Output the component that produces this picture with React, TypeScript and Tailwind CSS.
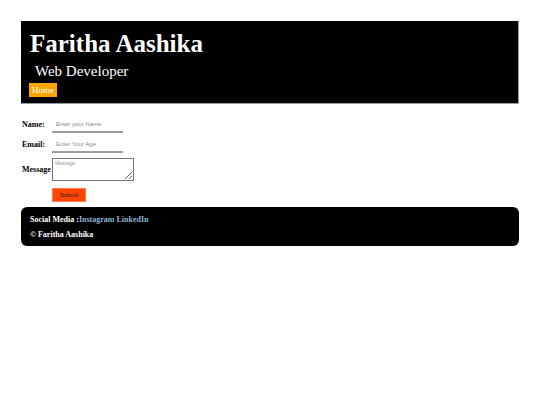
import React from "react";

// 폼 한 줄: 왼쪽 라벨 + 오른쪽 입력
function Row({
  label,
  className,
  children,
}: {
  label: string;
  className?: string;
  children: React.ReactNode;
}) {
  return (
    <div className={`flex items-center ${className ?? ""}`}>
      <label className="w-[31px] pl-px text-[8px] font-bold leading-none text-black">
        {label}
      </label>
      {children}
    </div>
  );
}

export default function App() {
  return (
    <div className="min-h-[405px] bg-white px-[21px] pt-[21px] font-['Liberation_Serif',serif]">
      <header className="flex h-[83px] flex-col border-b border-r border-[#9a9a9a] bg-black pl-[8px] pt-[10px] text-white">
        <h1 className="ml-px text-[25px] font-bold leading-[25px]">
          Faritha Aashika
        </h1>
        <h2 className="ml-[6px] mt-[8px] text-[15px] leading-[15px]">
          Web Developer
        </h2>
        <nav className="mt-[4px] flex">
          <a className="flex h-[14px] items-center bg-[#ffa500] px-[3px] text-[9px] leading-none text-white">
            Home
          </a>
        </nav>
      </header>

      <form className="mt-[12px] flex flex-col">
        <Row label="Name:">
          <input
            className="h-[17px] w-[71px] border-b-2 border-[#9e9e9e] pl-[4px] font-['Liberation_Sans',sans-serif] text-[6px] outline-none placeholder:text-[#8a8a8a]"
            placeholder="Enter your Name"
          />
        </Row>
        <Row label="Email:" className="mt-[3px]">
          <input
            className="h-[17px] w-[71px] border-b-2 border-[#9e9e9e] pl-[4px] font-['Liberation_Sans',sans-serif] text-[6px] outline-none placeholder:text-[#8a8a8a]"
            placeholder="Enter Your Age"
          />
        </Row>
        <Row label="Message" className="mt-[5px]">
          <textarea
            className="h-[23px] w-[82px] border border-[#767676] px-[2px] py-[1px] font-['Liberation_Sans',sans-serif] text-[5px] outline-none placeholder:text-[#9a9a9a]"
            placeholder="Message"
          />
        </Row>
        <div className="mt-[7px] pl-[31px]">
          <button
            type="button"
            className="flex h-[14px] w-[34px] items-center justify-center border border-[#ff7a4a] bg-[#ff4500] font-['Liberation_Sans',sans-serif] text-[6px] leading-none text-[#1a1a1a]"
          >
            Submit
          </button>
        </div>
      </form>

      <footer className="mt-[5px] rounded-[6px] bg-black pb-[4px] pl-[9px] pt-[5px] text-[8px] font-bold leading-[15px] text-white">
        <p>
          Social Media :<a className="text-[#8db3d1]">Instagram</a>{" "}
          <a className="text-[#8db3d1]">LinkedIn</a>
        </p>
        <p>© Faritha Aashika</p>
      </footer>
    </div>
  );
}
